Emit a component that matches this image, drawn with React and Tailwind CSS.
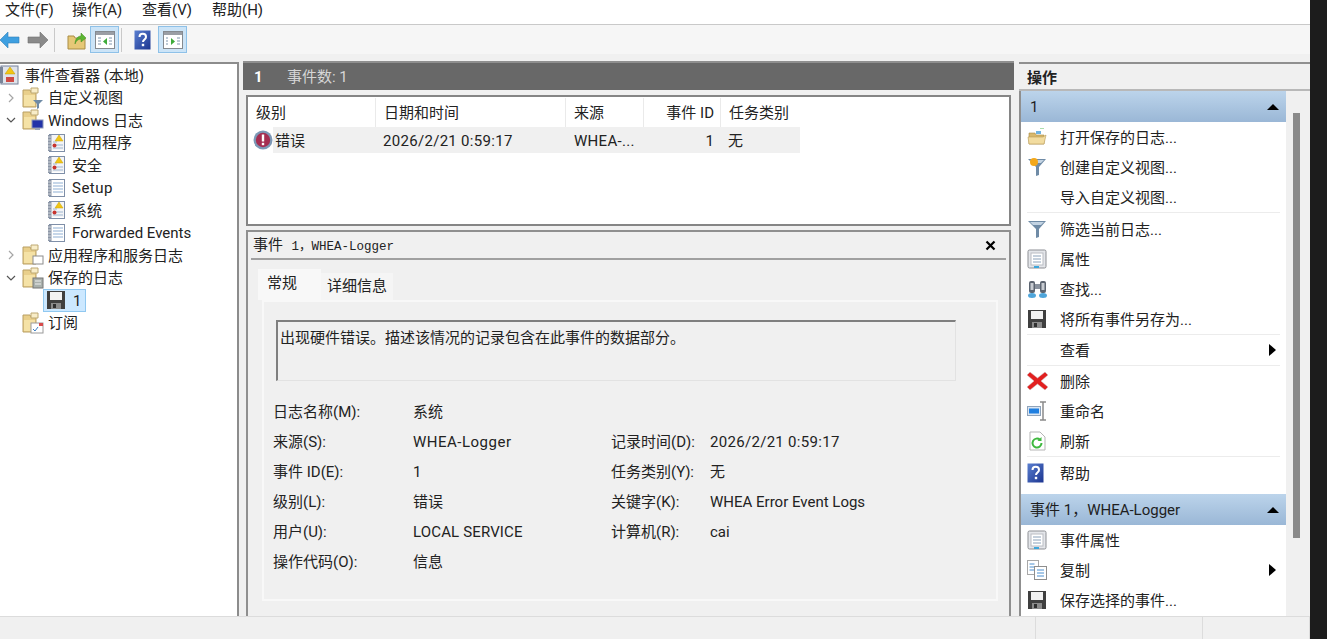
import React from "react";

function Folder({ children }) {
  return (
    <svg width="22" height="22" viewBox="0 0 22 22" className="shrink-0">
      <path d="M1 3h7l1 2h5v15H1z" fill="#e9cf8b" stroke="#b99f62" strokeWidth="1" />
      <path d="M9 1h7v5H9z" fill="#f8edc8" stroke="#bda873" />
      <path d="M2 8h11v11H2z" fill="#f5e2a6" />
      {children}
    </svg>
  );
}

function LogIcon({ warn }) {
  return (
    <svg width="20" height="20" viewBox="0 0 20 20" className="shrink-0">
      <rect x="2.5" y="1.5" width="15" height="17" fill="#fff" stroke="#7f8fa8" />
      <rect x="1" y="2" width="3.5" height="16" fill="#8c96a6" />
      <path d="M1 4h3M1 7h3M1 10h3M1 13h3M1 16h3" stroke="#dfe3e8" strokeWidth=".8" />
      <path d="M6 5h10M6 8h10M6 11h10M6 14h10" stroke="#8fb0d4" strokeWidth="1.2" />
      {warn && (
        <>
          <rect x="5" y="2" width="12" height="15" fill="#f3f4f6" />
          <path d="M6 12h10M6 15h10M6 9h4" stroke="#9fb6d0" />
          <path d="M12 2l4 6h-8z" fill="#f2c515" stroke="#c9a200" strokeWidth=".5" />
          <circle cx="7.5" cy="12.5" r="2" fill="#c8342f" />
        </>
      )}
    </svg>
  );
}

function Disk({ size = 20 }) {
  return (
    <svg width={size} height={size} viewBox="0 0 20 20" className="shrink-0">
      <path d="M1 1h18v18H1z" fill="#3f3f3f" />
      <rect x="4" y="2" width="12" height="8" fill="#f2f2f2" />
      <rect x="5" y="13" width="10" height="6" fill="#8b8b8b" />
      <rect x="7" y="14" width="3" height="4" fill="#2f2f2f" />
    </svg>
  );
}

function Chevron({ open }) {
  return (
    <svg width="10" height="10" viewBox="0 0 10 10" className="shrink-0">
      {open ? (
        <path d="M1 3l4 4 4-4" fill="none" stroke="#555" strokeWidth="1.2" />
      ) : (
        <path d="M3 1l4 4-4 4" fill="none" stroke="#a6a6a6" strokeWidth="1.2" />
      )}
    </svg>
  );
}

function TreeRow({ indent, chevron, icon, children }) {
  return (
    <div className={`flex items-center h-[22.5px] ${indent}`}>
      {chevron !== undefined && (
        <span className="w-[19px] shrink-0 pl-[3px] flex">
          <Chevron open={chevron} />
        </span>
      )}
      {icon}
      {children && <span className="pt-[2px]">{children}</span>}
    </div>
  );
}

function Funnel({ color = "#6f8ba6", dot }) {
  return (
    <svg width="20" height="20" viewBox="0 0 20 20" className="shrink-0">
      <path d="M1 2h18l-7 8v8l-3 1v-9z" fill={color} />
      <path d="M3 3h14l-3 3H6z" fill="#c3d3e2" />
      {dot && <circle cx="7" cy="5" r="4" fill="#f4a81a" />}
    </svg>
  );
}

function Props() {
  return (
    <svg width="20" height="20" viewBox="0 0 20 20" className="shrink-0">
      <rect x="1" y="1" width="18" height="18" rx="1.5" fill="#e4e6ea" stroke="#8d8f94" />
      <rect x="4" y="4" width="12" height="12" fill="#fff" stroke="#b9bcc2" />
      <path d="M6 7h8M6 10h8M6 13h8" stroke="#8aa0b8" />
      <rect x="7" y="17" width="5" height="2" fill="#3ba6dc" />
    </svg>
  );
}

function Help({ size = 17 }) {
  return (
    <svg width={size} height={size + 3} viewBox="0 0 17 20" className="shrink-0">
      <defs>
        <linearGradient id="helpg" x1="0" y1="0" x2="1" y2="1">
          <stop offset="0" stopColor="#5a7fd0" />
          <stop offset="1" stopColor="#1c3590" />
        </linearGradient>
      </defs>
      <rect x=".5" y=".5" width="16" height="19" fill="url(#helpg)" />
      <path d="M5.500 7c0-4.200 6.500-4.200 6.500 0 0 2.400-3 2.600-3 5" fill="none" stroke="#fff" strokeWidth="2" />
      <rect x="7.800" y="13.800" width="2.400" height="2.400" fill="#fff" />
    </svg>
  );
}

function ActionRow({ icon, children, arrow }) {
  return (
    <div className="flex items-center h-[30px] pl-[6px] pr-[8px] text-[15px] text-[#222]">
      <span className="w-[33px] shrink-0 flex">{icon}</span>
      <span className="flex-1 pt-[2px]">{children}</span>
      {arrow && <span className="w-0 h-0 border-y-[6px] border-y-transparent border-l-[7px] border-l-black mr-[2px]" />}
    </div>
  );
}

function SectionHead({ children }) {
  return (
    <div className="h-[31px] shrink-0 flex items-center justify-between pl-[9px] pr-[7px] bg-gradient-to-b from-[#bcd4eb] to-[#9ab7d6] text-[15px] text-[#1e1e1e]">
      <span className="pt-[2px]">{children}</span>
      <span className="w-0 h-0 border-x-[6px] border-x-transparent border-b-[6px] border-b-black" />
    </div>
  );
}

function Sep({ extra }) {
  return <div className={extra ? "h-px bg-[#ececec] mx-[6px] mb-px" : "h-px bg-[#ececec] mx-[6px]"} />;
}

function Field({ label, value, tight }) {
  return (
    <div className="flex h-[30px] items-center pt-[2px]">
      <span className="w-[140px] shrink-0">{label}</span>
      <span className={tight}>{value}</span>
    </div>
  );
}

function Field2({ label, value, tight }) {
  return (
    <div className="flex h-[30px] items-center pt-[2px]">
      <span className="w-[99px] shrink-0">{label}</span>
      <span className={tight}>{value}</span>
    </div>
  );
}

export default function App() {
  return (
    <div className="flex w-[1327px] h-[639px] overflow-hidden text-[15px] text-[#222] bg-[#1c1c1c] font-['Roboto','Noto_Sans_CJK_SC',sans-serif] leading-none">
      <div className="w-[1310px] h-full flex flex-col bg-[#f0f0f0]">
        {/* Menu */}
        <div className="h-[25px] shrink-0 bg-white border-b border-[#c9c9c9] flex items-center pl-[5px] pb-[3px] gap-[19px] text-[15px] whitespace-nowrap">
          <span className="w-[48px]">文件(F)</span>
          <span className="w-[51px]">操作(A)</span>
          <span className="w-[51px]">查看(V)</span>
          <span>帮助(H)</span>
        </div>
        {/* Toolbar */}
        <div className="h-[29px] shrink-0 bg-[#f6f6f6] flex items-center">
          <svg width="20" height="18" viewBox="0 0 20 18" className="shrink-0">
            <path d="M0 9l8-8v5h11v6H8v5z" fill="#3e9fe0" stroke="#2f7fb8" strokeWidth=".6" />
          </svg>
          <svg width="22" height="18" viewBox="0 0 22 18" className="shrink-0 ml-[7px]">
            <path d="M21 9l-8-8v5H1v6h12v5z" fill="#8a8a8a" stroke="#6e6e6e" strokeWidth=".6" />
          </svg>
          <div className="w-px h-[24px] bg-[#c9c9c9] ml-[5px]" />
          <svg width="20" height="20" viewBox="0 0 20 20" className="shrink-0 ml-[12px]">
            <path d="M1 6h6l1 2h10v11H1z" fill="#e6c877" stroke="#a98c44" />
            <path d="M8 14c0-5 3-8 6-8V3l5 5-5 4V9c-3 0-5 2-6 5z" fill="#5cb531" stroke="#3e8a1e" strokeWidth=".5" />
          </svg>
          <div className="w-[29px] h-[27px] ml-[3px] bg-[#cce4f7] border border-[#8ec1e8] flex items-center justify-center">
            <svg width="20" height="18" viewBox="0 0 20 18">
              <rect x=".5" y=".5" width="19" height="17" fill="#fff" stroke="#858a90" />
              <rect x="1" y="1" width="18" height="3" fill="#9a9ea5" />
              <path d="M3 7h3M3 10h3M3 13h3" stroke="#7f95ad" />
              <path d="M12 7v7l-4-3.500z" fill="#3eab3a" />
              <path d="M14 7h3M14 10h3M14 13h3" stroke="#7f95ad" />
            </svg>
          </div>
          <div className="w-px h-[24px] bg-[#c9c9c9] ml-[2px]" />
          <div className="ml-[12px] flex">
            <Help />
          </div>
          <div className="w-[29px] h-[27px] ml-[7px] bg-[#cce4f7] border border-[#8ec1e8] flex items-center justify-center">
            <svg width="20" height="18" viewBox="0 0 20 18">
              <rect x=".5" y=".5" width="19" height="17" fill="#fff" stroke="#858a90" />
              <rect x="1" y="1" width="18" height="3" fill="#9a9ea5" />
              <path d="M3 7h2M3 10h2M3 13h2" stroke="#7f95ad" />
              <path d="M8 7v7l4-3.500z" fill="#3eab3a" />
              <path d="M14 7h3M14 10h3M14 13h3" stroke="#7f95ad" />
            </svg>
          </div>
        </div>

        {/* Body */}
        <div className="flex-1 min-h-0 flex pt-[8px]">
          {/* Tree */}
          <div className="w-[239px] shrink-0 bg-white border-t-2 border-r-2 border-[#8c8c8c] overflow-hidden">
            <TreeRow indent="pl-0" icon={
              <svg width="20" height="20" viewBox="0 0 20 20" className="shrink-0 mr-[5px]">
                <rect x="1" y="1" width="17" height="18" fill="#dfe3ea" stroke="#75809a" />
                <rect x="0" y="2" width="3" height="16" fill="#7a8598" />
                <path d="M10 2l5 7H5z" fill="#f2c515" stroke="#c09a00" strokeWidth=".5" />
                <rect x="6" y="12" width="8" height="5" fill="#cf4a44" />
              </svg>
            }>事件查看器 (本地)</TreeRow>
            <TreeRow indent="pl-[3px]" chevron={false} icon={
              <span className="flex mr-[4px]"><Folder><path d="M11 13h10l-4 4v4l-2 1v-5z" fill="#6f8ba6" /></Folder></span>
            }>自定义视图</TreeRow>
            <TreeRow indent="pl-[3px]" chevron={true} icon={
              <span className="flex mr-[4px]"><Folder><rect x="10" y="11" width="11" height="8" fill="#2233a8" stroke="#8a96b8" /><rect x="13" y="19" width="5" height="2" fill="#9aa4b8" /></Folder></span>
            }>Windows 日志</TreeRow>
            <TreeRow indent="pl-[47px]" icon={<span className="flex mr-[5px]"><LogIcon warn /></span>}>应用程序</TreeRow>
            <TreeRow indent="pl-[47px]" icon={<span className="flex mr-[5px]"><LogIcon warn /></span>}>安全</TreeRow>
            <TreeRow indent="pl-[47px]" icon={<span className="flex mr-[5px]"><LogIcon /></span>}><span className="tracking-[0.5px]">Setup</span></TreeRow>
            <TreeRow indent="pl-[47px]" icon={<span className="flex mr-[5px]"><LogIcon warn /></span>}>系统</TreeRow>
            <TreeRow indent="pl-[47px]" icon={<span className="flex mr-[5px]"><LogIcon /></span>}>Forwarded Events</TreeRow>
            <TreeRow indent="pl-[3px]" chevron={false} icon={
              <span className="flex mr-[4px]"><Folder><rect x="11" y="12" width="10" height="8" fill="#fff" stroke="#8c8c8c" /></Folder></span>
            }>应用程序和服务日志</TreeRow>
            <TreeRow indent="pl-[3px]" chevron={true} icon={
              <span className="flex mr-[4px]"><Folder><rect x="11" y="11" width="10" height="10" fill="#a9b0ac" stroke="#777" /><path d="M13 14h6M13 17h6" stroke="#eee" /></Folder></span>
            }>保存的日志</TreeRow>
            <TreeRow indent="pl-[43px]" icon={
              <div className="flex items-center w-[43px] h-[23px] bg-[#cce8ff] border border-[#90c8f0] pl-[2px]">
                <Disk />
                <span className="ml-[7px] pt-[2px]">1</span>
              </div>
            } />
            <TreeRow indent="pl-[22px]" icon={
              <span className="flex mr-[4px]"><Folder><rect x="9" y="11" width="12" height="10" fill="#fff" stroke="#9a9a9a" /><rect x="17" y="11" width="4" height="3" fill="#d84b4b" /><path d="M11 17l2 2 3-4" stroke="#3b7fc4" fill="none" /></Folder></span>
            }>订阅</TreeRow>
          </div>

          {/* Center */}
          <div className="w-[771px] shrink-0 ml-[4px] flex flex-col">
            <div className="h-[29px] -mt-px shrink-0 bg-[#686868] border-t-2 border-[#8f8f8f] flex items-center pl-[11px] pt-[2px]">
              <span className="text-white font-bold w-[33px]">1</span>
              <span className="text-[#d6d6d6]">事件数: 1</span>
            </div>
            <div className="h-[131px] shrink-0 mt-[5px] mx-[3px] bg-white border-2 border-[#858585] pt-[1px]">
              <div className="flex h-[29px] items-center">
                <span className="w-[127px] pl-[8px] pt-[2px]">级别</span>
                <span className="w-[190px] pl-[8px] pt-[2px] border-l border-[#eaeaea] h-full flex items-center">日期和时间</span>
                <span className="w-[78px] pl-[8px] pt-[2px] border-l border-[#eaeaea] h-full flex items-center">来源</span>
                <span className="w-[77px] pr-[6px] pt-[2px] justify-end border-l border-[#eaeaea] h-full flex items-center">事件 ID</span>
                <span className="w-[80px] pl-[8px] pt-[2px] border-l border-[#eaeaea] h-full flex items-center">任务类别</span>
              </div>
              <div className="flex h-[26px] items-center">
                <div className="w-[25px] shrink-0 pl-[5px] flex">
                  <svg width="20" height="20" viewBox="0 0 20 20">
                    <circle cx="10" cy="10" r="9.500" fill="#7c98b6" />
                    <circle cx="10" cy="10" r="7.200" fill="#a52e52" />
                    <rect x="8.800" y="4.500" width="2.400" height="7" fill="#fff" />
                    <rect x="8.800" y="12.800" width="2.400" height="2.400" fill="#fff" />
                  </svg>
                </div>
                <div className="flex h-full items-center bg-[#f0f0f0] w-[527px] pt-[2px]">
                  <span className="w-[102px] pl-[2px]">错误</span>
                  <span className="w-[190px] pl-[8px] tracking-[0.3px]">2026/2/21 0:59:17</span>
                  <span className="w-[78px] pl-[9px] tracking-[0.3px]">WHEA-...</span>
                  <span className="w-[77px] pr-[6px] text-right">1</span>
                  <span className="w-[80px] pl-[8px]">无</span>
                </div>
              </div>
            </div>
            <div className="flex-1 min-h-0 mt-[4px] mx-[3px] border-t-2 border-l-2 border-r-2 border-[#8f8f8f] flex flex-col px-[3px] overflow-hidden">
              <div className="h-[28px] shrink-0 flex items-center justify-between border-b-2 border-[#a0a0a0] text-[12.5px] font-['Liberation_Mono','Noto_Sans_CJK_SC',monospace]">
                <span className="pl-[2px]"><span className="text-[15px] mr-[1px] font-['Noto_Sans_CJK_SC']">事件</span> 1，WHEA-Logger</span>
                <svg width="11" height="11" viewBox="0 0 11 11" className="mr-[10px]">
                  <path d="M1.500 1.500l8 8M9.500 1.500l-8 8" stroke="#000" strokeWidth="2.200" />
                </svg>
              </div>
              <div className="flex items-end h-[40px] shrink-0 pl-[7px]">
                <div className="w-[63px] h-[31px] bg-[#f8f8f8] flex items-start pt-[7px] pl-[9px]">常规</div>
                <div className="w-[72px] h-[27px] bg-[#f5f5f5] flex items-center pl-[6px]">详细信息</div>
              </div>
              <div className="ml-[11px] mr-[8px] flex-1 border-2 border-[#f8f8f8] pt-[18px] pl-[12px] pr-[40px]">
                <div className="h-[61px] border-t-2 border-l-2 border-r border-b border-t-[#7f7f7f] border-l-[#7f7f7f] border-r-[#e2e2e2] border-b-[#e2e2e2] pt-[9px] pl-[2px]">
                  出现硬件错误。描述该情况的记录包含在此事件的数据部分。
                </div>
                <div className="flex mt-[15px] -ml-[3px]">
                  <div className="w-[338px] shrink-0">
                    <Field label="日志名称(M):" value="系统" />
                    <Field label="来源(S):" value="WHEA-Logger" tight="tracking-[0.5px]" />
                    <Field label="事件 ID(E):" value="1" />
                    <Field label="级别(L):" value="错误" />
                    <Field label="用户(U):" value="LOCAL SERVICE" tight="tracking-[0.15px]" />
                    <Field label="操作代码(O):" value="信息" />
                  </div>
                  <div className="pt-[30px]">
                    <Field2 label="记录时间(D):" value="2026/2/21 0:59:17" tight="tracking-[0.3px]" />
                    <Field2 label="任务类别(Y):" value="无" />
                    <Field2 label="关键字(K):" value="WHEA Error Event Logs" />
                    <Field2 label="计算机(R):" value="cai" />
                  </div>
                </div>
              </div>
              <div className="h-[15px] shrink-0" />
            </div>
          </div>

          {/* Right */}
          <div className="flex-1 ml-[5px] flex flex-col border-t-2 border-[#8f8f8f] min-w-0">
            <div className="h-[27px] shrink-0 border-b-2 border-[#b8b8b8] flex items-center pl-[8px] pt-[4px] font-bold">操作</div>
            <div className="flex-1 min-h-0 flex border-l-2 border-[#8f8f8f]">
              <div className="w-[265px] shrink-0 bg-white flex flex-col overflow-hidden">
                <SectionHead>1</SectionHead>
                <div>
                  <ActionRow icon={
                    <svg width="20" height="18" viewBox="0 0 20 18">
                      <path d="M2 5h6l1 2h8v9H2z" fill="#d8b86c" stroke="#a98c44" strokeWidth=".6" />
                      <path d="M1 9h15l3-2-2 9H2z" fill="#f2dca0" stroke="#b89b55" strokeWidth=".6" />
                      <path d="M13 0h4" stroke="#5cc05c" />
                      <rect x="9" y="3" width="5" height="3" fill="#6fb3e0" />
                    </svg>
                  }>打开保存的日志...</ActionRow>
                  <ActionRow icon={<Funnel dot />}>创建自定义视图...</ActionRow>
                  <ActionRow>导入自定义视图...</ActionRow>
                  <Sep extra />
                  <ActionRow icon={<Funnel />}>筛选当前日志...</ActionRow>
                  <ActionRow icon={<Props />}>属性</ActionRow>
                  <ActionRow icon={
                    <svg width="21" height="20" viewBox="0 0 21 20">
                      <rect x="2" y="2" width="6" height="12" rx="2" fill="#5c6470" />
                      <rect x="13" y="2" width="6" height="12" rx="2" fill="#5c6470" />
                      <rect x="8" y="5" width="5" height="5" fill="#8a929e" />
                      <rect x="3.500" y="4" width="3" height="7" fill="#c8ccd2" />
                      <rect x="14.500" y="4" width="3" height="7" fill="#c8ccd2" />
                      <ellipse cx="5" cy="16.500" rx="4" ry="2.500" fill="#4fa5da" />
                      <ellipse cx="16" cy="16.500" rx="4" ry="2.500" fill="#4fa5da" />
                    </svg>
                  }>查找...</ActionRow>
                  <ActionRow icon={<Disk />}>将所有事件另存为...</ActionRow>
                  <Sep />
                  <ActionRow arrow>查看</ActionRow>
                  <Sep />
                  <ActionRow icon={
                    <svg width="21" height="20" viewBox="0 0 21 20">
                      <path d="M3 1l7.500 6L18 1l3 3-7 6 7 6-3 3-7.500-6L3 19l-3-3 7-6-7-6z" fill="#e22020" stroke="#c9c9c9" strokeWidth=".5" />
                    </svg>
                  }>删除</ActionRow>
                  <ActionRow icon={
                    <svg width="20" height="20" viewBox="0 0 20 20">
                      <rect x="0.500" y="5.500" width="13" height="9" fill="#dbe6f2" stroke="#8fa3ba" />
                      <rect x="2" y="7.500" width="10" height="5" fill="#1f7fe0" />
                      <path d="M13 1h6M16 1v18M13 19h6" stroke="#8a8a8a" strokeWidth="1.500" />
                    </svg>
                  }>重命名</ActionRow>
                  <ActionRow icon={
                    <svg width="20" height="20" viewBox="0 0 20 20">
                      <path d="M3 1h10l5 5v13H3z" fill="#fff" stroke="#b5b5b5" />
                      <path d="M14.500 12a4.500 4.500 0 1 1-1.500-3.300" fill="none" stroke="#3eb83e" strokeWidth="2" />
                      <path d="M14.500 6v4h-4z" fill="#3eb83e" />
                    </svg>
                  }>刷新</ActionRow>
                  <Sep extra />
                  <ActionRow icon={<Help />}>帮助</ActionRow>
                </div>
                <div className="h-[6px] shrink-0" />
                <SectionHead>事件 1，WHEA-Logger</SectionHead>
                <div>
                  <ActionRow icon={<Props />}>事件属性</ActionRow>
                  <ActionRow arrow icon={
                    <svg width="20" height="20" viewBox="0 0 20 20">
                      <rect x="0.500" y="0.500" width="11" height="14" fill="#fff" stroke="#a8a8a8" />
                      <path d="M2.500 4h5M2.500 7h5M2.500 10h5" stroke="#4d90d0" />
                      <rect x="7.500" y="6.500" width="12" height="13" fill="#fff" stroke="#8e8e8e" />
                      <path d="M10 10h7M10 13h7M10 16h7" stroke="#4d90d0" />
                    </svg>
                  }>复制</ActionRow>
                  <ActionRow icon={<Disk />}>保存选择的事件...</ActionRow>
                </div>
              </div>
              <div className="flex-1 pl-[7px] pt-[22px]">
                <div className="w-[7px] h-[425px] bg-[#8a8a8a]" />
              </div>
            </div>
          </div>
        </div>

        {/* Status */}
        <div className="h-[23px] shrink-0 border-t border-[#dcdcdc] flex justify-end bg-[#f0f0f0]">
          <div className="w-[167px] border-l border-[#dcdcdc]" />
          <div className="w-[107px] border-l border-[#dcdcdc]" />
          <div className="w-[1px] border-l border-[#dcdcdc]" />
        </div>
      </div>
      <div className="flex-1" />
    </div>
  );
}
